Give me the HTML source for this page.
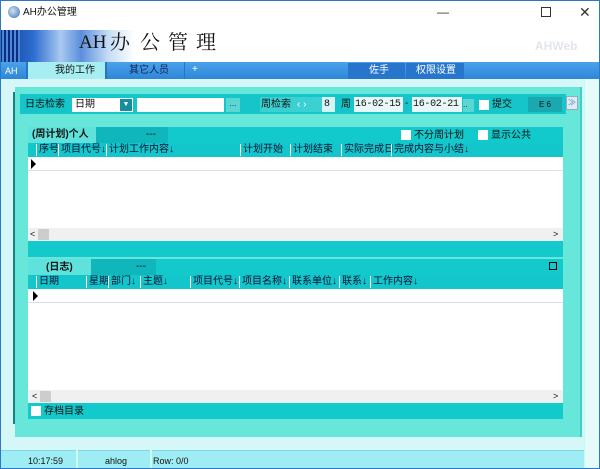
<!DOCTYPE html>
<html><head><meta charset="utf-8"><style>
*{margin:0;padding:0;box-sizing:border-box}
body{width:600px;height:469px;overflow:hidden;position:relative;background:#d6f7f7;font-family:"Liberation Sans","Noto Sans CJK SC",sans-serif;font-size:10px;line-height:12px;color:#111}
.a{position:absolute}
.t{white-space:nowrap;line-height:12px}
.hd span{position:absolute;top:1px;border-left:1px solid #fff;padding-left:2px;height:12px;line-height:12px;color:#113;white-space:nowrap}
.cb{position:absolute;width:10px;height:10px;background:#fff}
.bt{position:absolute;top:30px;font-size:20px;line-height:26px;font-family:'Liberation Serif','Noto Serif CJK SC',serif;color:#111}
</style></head><body>
<div class="a" style="left:0;top:0;width:600px;height:30px;background:#fff"></div>
<div class="a" style="left:8px;top:6px;width:12px;height:12px;border-radius:50%;background:radial-gradient(circle at 40% 40%,#cfe3f7,#3b6fb0)"></div>
<div class="a t" style="left:23px;top:7px;font-size:10px">AH办公管理</div>
<div class="a t" style="left:437px;top:6px;font-size:12px;color:#333">—</div>
<div class="a" style="left:541px;top:7px;width:10px;height:10px;border:1px solid #333"></div>
<div class="a t" style="left:579px;top:6px;font-size:14px;color:#333">✕</div>
<div class="a" style="left:0;top:30px;width:600px;height:32px;background:#fff"></div>
<div class="a" style="left:0;top:30px;width:135px;height:32px;background:linear-gradient(90deg,#0b3f9a 0%,#2d6ed0 25%,#a9c9f0 45%,#5b8fdc 60%,#c4dcf6 80%,#fff 100%)"></div>
<div class="a" style="left:0;top:30px;width:20px;height:32px;background:repeating-linear-gradient(90deg,#0a2f80 0 2px,#4f86d8 2px 4px)"></div>
<div class="bt" style="left:79px;font-size:19px">AH</div>
<div class="bt" style="left:110px">办</div>
<div class="bt" style="left:140px">公</div>
<div class="bt" style="left:168px">管</div>
<div class="bt" style="left:196px">理</div>
<div class="a t" style="left:535px;top:40px;font-size:12px;font-weight:bold;color:#e2e6ea">AHWeb</div>
<div class="a" style="left:0;top:62px;width:600px;height:17px;background:linear-gradient(#4aa2ea,#2f86d9)"></div>
<div class="a t" style="left:5px;top:65px;color:#fff;font-size:9px">AH</div>
<div class="a" style="left:26px;top:62px;width:79px;height:17px;background:#a6eef1;border-left:2px solid #2a75c2"></div>
<div class="a t" style="left:55px;top:65px">我的工作</div>
<div class="a" style="left:105px;top:62px;width:80px;height:17px;border-left:2px solid #2a75c2;border-right:1px solid #2a75c2"></div>
<div class="a t" style="left:129px;top:65px;color:#102050">其它人员</div>
<div class="a t" style="left:192px;top:64px;color:#fff">+</div>
<div class="a" style="left:348px;top:63px;width:57px;height:16px;background:#2776cc"></div>
<div class="a t" style="left:369px;top:65px;color:#fff">佐手</div>
<div class="a" style="left:406px;top:63px;width:58px;height:16px;background:#2776cc"></div>
<div class="a t" style="left:416px;top:65px;color:#fff">权限设置</div>
<!-- main -->
<div class="a" style="left:15px;top:87px;width:567px;height:350px;background:#67e7da;border-right:2px solid #3fcfc8"></div>
<div class="a" style="left:13px;top:92px;width:2px;height:332px;background:#197e86"></div>
<div class="a" style="left:20px;top:94px;width:546px;height:20px;background:#15c5c9"></div>
<div class="a t" style="left:25px;top:99px">日志检索</div>
<div class="a" style="left:72px;top:98px;width:61px;height:14px;background:#fff"></div>
<div class="a t" style="left:75px;top:99px">日期</div>
<div class="a" style="left:120px;top:99px;width:12px;height:12px;background:#158ea0;color:#fff;font-size:7px;text-align:center;line-height:12px">▼</div>
<div class="a" style="left:137px;top:98px;width:87px;height:14px;background:#fff"></div>
<div class="a" style="left:226px;top:98px;width:14px;height:14px;background:#5bd7d3;font-size:8px;text-align:center">...</div>
<div class="a" style="left:260px;top:97px;width:63px;height:15px;background:#3bd1d2"></div>
<div class="a t" style="left:261px;top:99px">周检索</div>
<div class="a t" style="left:297px;top:99px;color:#fff">‹ ›</div>
<div class="a" style="left:322px;top:97px;width:13px;height:15px;background:#d6f5f5"></div>
<div class="a t" style="left:324px;top:99px;font-family:'Liberation Mono',monospace">8</div>
<div class="a t" style="left:341px;top:99px">周</div>
<div class="a" style="left:354px;top:97px;width:49px;height:15px;background:#e8f8f8"></div>
<div class="a t" style="left:355px;top:99px;font-family:'Liberation Mono',monospace;font-size:10px;letter-spacing:-0.3px">16-02-15</div>
<div class="a t" style="left:405px;top:98px">-</div>
<div class="a" style="left:412px;top:97px;width:50px;height:15px;background:#e8f8f8"></div>
<div class="a t" style="left:413px;top:99px;font-family:'Liberation Mono',monospace;font-size:10px;letter-spacing:-0.3px">16-02-21</div>
<div class="a" style="left:463px;top:99px;width:11px;height:13px;background:#5bd7d3;font-size:8px">..</div>
<div class="cb" style="left:479px;top:100px"></div>
<div class="a t" style="left:492px;top:99px">提交</div>
<div class="a" style="left:528px;top:97px;width:34px;height:15px;background:#1aa9b1;font-size:8px;text-align:center;line-height:15px">E 6</div>
<div class="a" style="left:566px;top:96px;width:12px;height:14px;background:#d7eef8;border:1px solid #9ab;font-size:8px;text-align:center;color:#779">≫</div>
<!-- top grid -->
<div class="a" style="left:28px;top:127px;width:535px;height:16px;background:#12c9cc"></div>
<div class="a" style="left:28px;top:127px;width:68px;height:16px;background:#5fe2dc"></div>
<div class="a" style="left:96px;top:127px;width:72px;height:16px;background:#0fb6bb"></div>
<div class="a t" style="left:32px;top:129px;font-weight:bold">(周计划)个人</div>
<div class="a t" style="left:146px;top:129px">---</div>
<div class="cb" style="left:401px;top:130px"></div>
<div class="a t" style="left:414px;top:130px">不分周计划</div>
<div class="cb" style="left:478px;top:130px"></div>
<div class="a t" style="left:491px;top:130px">显示公共</div>
<div class="a" style="left:28px;top:143px;width:535px;height:14px;background:#12c6cb"></div>
<div class="a hd" style="left:28px;top:143px;width:535px;height:14px">
<span style="left:8px">序号</span><span style="left:30px">项目代号↓</span><span style="left:78px">计划工作内容↓</span><span style="left:212px">计划开始</span><span style="left:262px">计划结束</span><span style="left:313px">实际完成日</span><span style="left:363px">完成内容与小结↓</span></div>
<div class="a" style="left:28px;top:157px;width:535px;height:71px;background:#fff"></div>
<div class="a" style="left:28px;top:170px;width:535px;height:1px;background:#dde"></div>
<div class="a" style="left:31px;top:159px;width:0;height:0;border-left:5px solid #000;border-top:5px solid transparent;border-bottom:5px solid transparent"></div>
<div class="a" style="left:28px;top:228px;width:535px;height:13px;background:#f0f0f0"></div>
<div class="a" style="left:38px;top:229px;width:11px;height:11px;background:#cdcdcd"></div>
<div class="a t" style="left:30px;top:228px;font-size:9px">&lt;</div>
<div class="a t" style="left:553px;top:228px;font-size:9px">&gt;</div>
<div class="a" style="left:28px;top:241px;width:535px;height:16px;background:#12c9cc"></div>
<!-- lower grid -->
<div class="a" style="left:28px;top:259px;width:535px;height:16px;background:#12c9cc"></div>
<div class="a" style="left:28px;top:259px;width:63px;height:16px;background:#5fe2dc"></div>
<div class="a" style="left:91px;top:259px;width:65px;height:16px;background:#0fb6bb"></div>
<div class="a t" style="left:46px;top:262px;font-weight:bold">(日志)</div>
<div class="a t" style="left:136px;top:261px">---</div>
<div class="a" style="left:549px;top:262px;width:8px;height:8px;border:1px solid #000"></div>
<div class="a" style="left:28px;top:275px;width:535px;height:14px;background:#12c6cb"></div>
<div class="a hd" style="left:28px;top:275px;width:535px;height:14px">
<span style="left:8px">日期</span><span style="left:58px">星期</span><span style="left:80px">部门↓</span><span style="left:112px">主题↓</span><span style="left:162px">项目代号↓</span><span style="left:211px">项目名称↓</span><span style="left:261px">联系单位↓</span><span style="left:311px">联系↓</span><span style="left:342px">工作内容↓</span></div>
<div class="a" style="left:28px;top:289px;width:535px;height:101px;background:#fff"></div>
<div class="a" style="left:28px;top:302px;width:535px;height:1px;background:#dde"></div>
<div class="a" style="left:33px;top:291px;width:0;height:0;border-left:5px solid #000;border-top:5px solid transparent;border-bottom:5px solid transparent"></div>
<div class="a" style="left:28px;top:390px;width:535px;height:13px;background:#f0f0f0"></div>
<div class="a" style="left:40px;top:391px;width:11px;height:11px;background:#cdcdcd"></div>
<div class="a t" style="left:32px;top:390px;font-size:9px">&lt;</div>
<div class="a t" style="left:553px;top:390px;font-size:9px">&gt;</div>
<div class="a" style="left:28px;top:403px;width:535px;height:16px;background:#12c9cc"></div>
<div class="cb" style="left:31px;top:406px"></div>
<div class="a t" style="left:44px;top:406px">存档目录</div>
<!-- status -->
<div class="a" style="left:0;top:450px;width:584px;height:19px;background:#9fedf4;border-top:1px solid #7fd8e4"></div>
<div class="a" style="left:76px;top:450px;width:2px;height:18px;background:#cfe"></div>
<div class="a" style="left:150px;top:450px;width:2px;height:18px;background:#cfe"></div>
<div class="a t" style="left:28px;top:455px;font-size:9px">10:17:59</div>
<div class="a t" style="left:105px;top:455px;font-size:9px">ahlog</div>
<div class="a t" style="left:153px;top:455px;font-size:9px">Row: 0/0</div>
<div class="a" style="left:584px;top:79px;width:15px;height:390px;background:#e6fafa;border-left:1px solid #bfe"></div>
<div class="a" style="left:0;top:0;width:600px;height:469px;border:1px solid #2b79c6"></div>
</body></html>
